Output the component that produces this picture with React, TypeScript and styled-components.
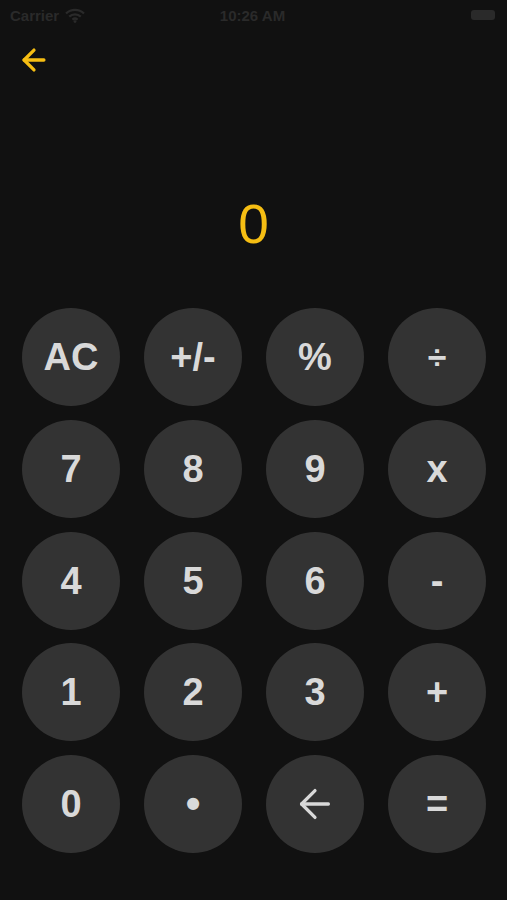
import React from 'react';
import styled, { createGlobalStyle } from 'styled-components';
import { ArrowLeft } from 'lucide-react';

const GlobalStyle = createGlobalStyle`
  html, body {
    margin: 0;
    padding: 0;
    background: #111111;
  }
  body {
    font-family: "Liberation Sans", Arial, sans-serif;
  }
`;

const Screen = styled.div`
  width: 507px;
  min-height: 900px;
  background: #111111;
  display: flex;
  flex-direction: column;
`;

const StatusBar = styled.div`
  height: 30px;
  display: grid;
  grid-template-columns: 1fr auto 1fr;
  align-items: center;
  padding: 0 12px 0 10px;
  color: #2a2a2a;
  font-size: 15px;
  font-weight: 600;
`;

const Carrier = styled.div`
  display: flex;
  align-items: center;
  gap: 6px;
`;

const Battery = styled.div`
  justify-self: end;
  width: 24px;
  height: 10px;
  border-radius: 3px;
  background: #2a2a2a;
`;

const NavBar = styled.div`
  height: 60px;
  display: flex;
  align-items: center;
  padding-left: 17px;
  color: #f6be13;
`;

const Display = styled.div`
  height: 218px;
  box-sizing: border-box;
  padding-top: 107px;
  text-align: center;
  color: #f6be13;
  font-size: 55px;
  line-height: 1;
  font-family: "Liberation Sans", Arial, sans-serif;
  font-weight: 400;
`;

const Keypad = styled.div`
  display: grid;
  grid-template-columns: repeat(4, 98px);
  grid-auto-rows: 98px;
  column-gap: 24px;
  row-gap: 13.75px;
  padding: 0 22px;
`;

const Key = styled.button<{ $size?: number }>`
  width: 98px;
  height: 98px;
  border: none;
  border-radius: 50%;
  background: #333333;
  color: #d9d9d9;
  font-family: "Liberation Sans", Arial, sans-serif;
  font-weight: 700;
  font-size: ${p => p.$size ?? 38}px;
  line-height: 1;
  display: flex;
  align-items: center;
  justify-content: center;
  padding: 0;
  cursor: pointer;
`;

const WifiIcon = () => (
  <svg width="20" height="15" viewBox="0 0 20 15">
    <path d="M1 5.5a13 13 0 0 1 18 0" stroke="#2a2a2a" strokeWidth="2.2" fill="none" />
    <path d="M4.2 8.6a8.5 8.5 0 0 1 11.6 0" stroke="#2a2a2a" strokeWidth="2.2" fill="none" />
    <path d="M7.4 11.6a4 4 0 0 1 5.2 0" stroke="#2a2a2a" strokeWidth="2.2" fill="none" />
    <circle cx="10" cy="13.6" r="1.4" fill="#2a2a2a" />
  </svg>
);

type KeyDef = { label: React.ReactNode; size?: number };

const keys: KeyDef[] = [
  { label: 'AC' },
  { label: '+/-' },
  { label: '%' },
  { label: '÷', size: 34 },
  { label: '7' },
  { label: '8' },
  { label: '9' },
  { label: 'x' },
  { label: '4' },
  { label: '5' },
  { label: '6' },
  { label: '-' },
  { label: '1' },
  { label: '2' },
  { label: '3' },
  { label: '+' },
  { label: '0' },
  { label: '•', size: 42 },
  { label: <ArrowLeft size={46} strokeWidth={1.7} /> },
  { label: '=' },
];

export default function App() {
  return (
    <>
      <GlobalStyle />
      <Screen>
        <StatusBar>
          <Carrier>
            Carrier <WifiIcon />
          </Carrier>
          <div>10:26 AM</div>
          <Battery />
        </StatusBar>
        <NavBar>
          <ArrowLeft size={34} strokeWidth={2.3} />
        </NavBar>
        <Display>0</Display>
        <Keypad>
          {keys.map((k, i) => (
            <Key key={i} $size={k.size}>
              {k.label}
            </Key>
          ))}
        </Keypad>
      </Screen>
    </>
  );
}
